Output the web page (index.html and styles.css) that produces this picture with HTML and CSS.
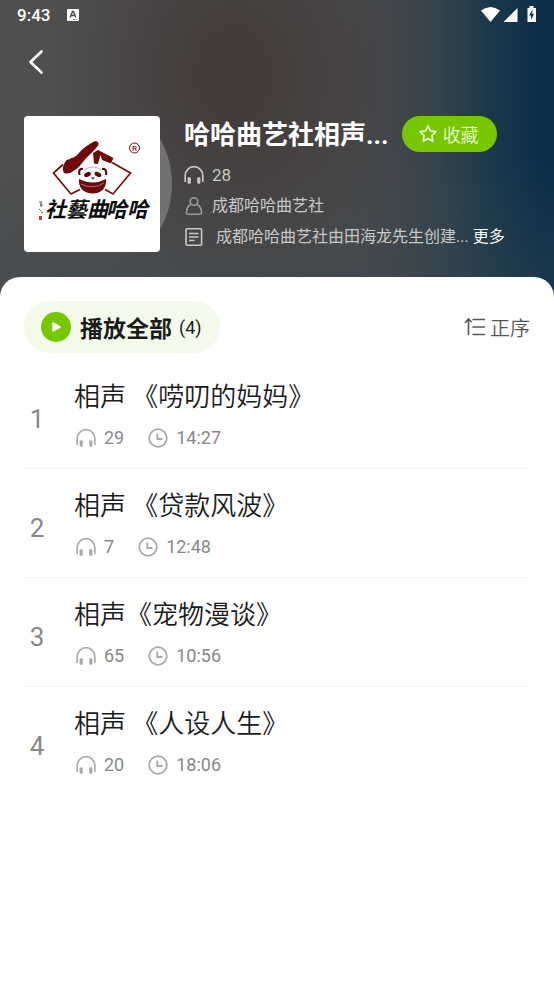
FILE: index.html
```html
<!DOCTYPE html>
<html lang="zh-CN">
<head>
  <meta charset="UTF-8">
  <meta name="viewport" content="width=device-width, initial-scale=1.0">
  <title>哈哈曲艺社相声</title>
  <link rel="stylesheet" href="styles.css">
</head>
<body>
  <!-- shared icons -->
  <svg class="defs" width="0" height="0" aria-hidden="true">
    <symbol id="headphones" viewBox="0 0 20 20">
      <path d="M1.200 17V10.500a8.800 8.800 0 0 1 17.600 0V17" fill="none" stroke="currentColor" stroke-width="1.700"/>
      <rect x="3.600" y="12.200" width="3.200" height="6.600" rx="1" fill="currentColor"/>
      <rect x="13.200" y="12.200" width="3.200" height="6.600" rx="1" fill="currentColor"/>
    </symbol>
    <symbol id="clock" viewBox="0 0 20 20">
      <circle cx="10" cy="10" r="8.800" fill="none" stroke="currentColor" stroke-width="1.800"/>
      <path d="M9.300 5.500V11H14.500" fill="none" stroke="currentColor" stroke-width="1.800"/>
    </symbol>
  </svg>

  <header class="hero">
    <div class="status-bar">
      <span class="time">9:43</span>
      <svg class="keyboard" width="12" height="14" viewBox="0 0 12 14">
        <rect y="1" width="12" height="12" rx="1" fill="#fff"/>
        <path d="M3.200 9.500L5.500 3.500H6.500L8.800 9.500M4 7.500H8" fill="none" stroke="#4a4a4a" stroke-width="1.400"/>
        <path d="M6 11.500h2M9.200 11.500h1" stroke="#4a4a4a" stroke-width="0.800"/>
      </svg>
      <svg class="signals" width="56" height="18" viewBox="0 0 56 18">
        <path d="M0 4.500Q9.500-2.500 19 4.500L9.500 16z" fill="#fff"/>
        <path d="M22.500 16L36.500 2V16z" fill="#fff"/>
        <path d="M46.500 2h2V0h4v2h2.500v14h-8.500z" fill="#fff"/>
        <path d="M51.500 3.500L48 9.500h2V14l3.200-6.200h-2z" fill="#24394a"/>
      </svg>
    </div>

    <nav class="nav">
      <button type="button" class="back" aria-label="返回">
        <svg width="16" height="26" viewBox="0 0 16 26"><path d="M13.500 2.500L2.500 13L13.500 23.500" fill="none" stroke="#fff" stroke-width="2.600" stroke-linecap="round" stroke-linejoin="round"/></svg>
      </button>
    </nav>

    <div class="album">
      <div class="cover">
        <svg width="136" height="136" viewBox="0 0 136 136" role="img" aria-label="哈哈曲艺社">
          <path d="M39 48.500L29.500 57L47 78L56 73.500M88 46.500L106.500 57L89 78L81 73.500" fill="none" stroke="#6f1010" stroke-width="1.700"/>
          <path d="M40 57C38 54 39 48 42 45C43 42 45 45 47 42C50 42 52 40 54 38C59 32 65 28 70 25.500C73 24.500 75 26 74.500 29C71 34 65 39 61 43.500C57 48 54 53 50 54.500C47 57 43 58.500 40 57z" fill="#6f0a0a"/>
          <path d="M69 37L74 34L89.500 42L87 47.500L78 44L76.500 39L74 48L70 47.500z" fill="#6f0a0a"/>
          <path d="M55.500 59Q54 52 59 53M78 53Q83 52 82 59" fill="none" stroke="#4f1010" stroke-width="2.200"/>
          <path d="M60 54Q69 48 78 54" fill="none" stroke="#b99" stroke-width="0.800"/>
          <ellipse cx="63.500" cy="58.500" rx="3.600" ry="2.200" transform="rotate(-25 63.500 58.500)" fill="#5a0a0a"/>
          <ellipse cx="74" cy="58.500" rx="3.600" ry="2.200" transform="rotate(25 74 58.500)" fill="#5a0a0a"/>
          <path d="M67 61.500h4l-2 2z" fill="#4f1010"/>
          <path d="M55 63Q69 70 82 63C83 72 77 77.500 69 77.500C60 77.500 54 72 55 63z" fill="#6f0a0a"/>
          <path d="M57 68Q69 74 80 67" fill="none" stroke="#c99" stroke-width="0.700"/>
          <circle cx="110.500" cy="32" r="5" fill="none" stroke="#6f1010" stroke-width="1"/>
          <text x="108" y="35" class="reg">R</text>
          <text x="21" y="101" class="brush">社藝曲</text>
          <text x="82" y="101" class="brush">哈哈</text>
          <path d="M15 86h3M16 89h3M17 86v5M15 93l2 2M17 96l2 1" stroke="#333" stroke-width="0.800"/>
          <rect x="15" y="100" width="3" height="4" fill="#a44"/>
        </svg>
      </div>

      <div class="info">
        <div class="title-row">
          <h1>哈哈曲艺社相声...</h1>
          <button type="button" class="favorite">
            <svg width="20" height="20" viewBox="0 0 20 20"><path d="M10 1.800L12.400 6.900L18 7.700L13.900 11.600L14.900 17.200L10 14.500L5.100 17.200L6.100 11.600L2 7.700L7.600 6.900z" fill="none" stroke="currentColor" stroke-width="1.700" stroke-linejoin="round"/></svg>
            收藏
          </button>
        </div>
        <div class="info-line count">
          <svg width="20" height="20"><use href="#headphones"/></svg>
          <span>28</span>
        </div>
        <div class="info-line author">
          <svg width="20" height="20" viewBox="0 0 20 20"><g fill="none" stroke="currentColor" stroke-width="1.600"><circle cx="10" cy="5.500" r="3.800"/><path d="M7 8.500C3.500 10 2.500 13 2.500 16.500Q2.500 18.200 4.200 18.200H15.800Q17.500 18.200 17.500 16.500C17.500 13 16.500 10 13 8.500"/></g></svg>
          <span>成都哈哈曲艺社</span>
        </div>
        <div class="info-line intro">
          <svg width="20" height="20" viewBox="0 0 20 20"><g fill="none" stroke="currentColor" stroke-width="1.600"><rect x="2" y="1.800" width="15.600" height="16.400" rx="1"/><path d="M5 6.500H14.500M5 10H14.500M5 13.500H10.500"/></g></svg>
          <span>成都哈哈曲艺社由田海龙先生创建...</span>
          <a href="#">更多</a>
        </div>
      </div>
    </div>
  </header>

  <main class="sheet">
    <div class="toolbar">
      <button type="button" class="play-all">
        <svg width="30" height="30" viewBox="0 0 30 30"><circle cx="15" cy="15" r="15" fill="#76c700"/><path d="M12 11V19L19 15z" fill="#fff" stroke="#fff" stroke-width="1.500" stroke-linejoin="round"/></svg>
        <strong>播放全部</strong>
        <span>(4)</span>
      </button>
      <button type="button" class="sort">
        <svg width="22" height="20" viewBox="0 0 22 20"><path d="M4.500 18V3M1 6L4.500 2L7.500 5M8.500 2.500H21M8.500 10H21M8.500 17.500H21" fill="none" stroke="currentColor" stroke-width="1.600"/></svg>
        正序
      </button>
    </div>

    <ol class="tracks">
      <li>
        <span class="num">1</span>
        <div class="track">
          <h2>相声 《唠叨的妈妈》</h2>
          <div class="meta">
            <span><svg width="20" height="20"><use href="#headphones"/></svg>29</span>
            <span><svg width="20" height="20"><use href="#clock"/></svg>14:27</span>
          </div>
        </div>
      </li>
      <li>
        <span class="num">2</span>
        <div class="track">
          <h2>相声 《贷款风波》</h2>
          <div class="meta">
            <span><svg width="20" height="20"><use href="#headphones"/></svg>7</span>
            <span><svg width="20" height="20"><use href="#clock"/></svg>12:48</span>
          </div>
        </div>
      </li>
      <li>
        <span class="num">3</span>
        <div class="track">
          <h2>相声《宠物漫谈》</h2>
          <div class="meta">
            <span><svg width="20" height="20"><use href="#headphones"/></svg>65</span>
            <span><svg width="20" height="20"><use href="#clock"/></svg>10:56</span>
          </div>
        </div>
      </li>
      <li>
        <span class="num">4</span>
        <div class="track">
          <h2>相声 《人设人生》</h2>
          <div class="meta">
            <span><svg width="20" height="20"><use href="#headphones"/></svg>20</span>
            <span><svg width="20" height="20"><use href="#clock"/></svg>18:06</span>
          </div>
        </div>
      </li>
    </ol>
  </main>
</body>
</html>
```
FILE: styles.css
```css
* {
  box-sizing: border-box;
}
body {
  margin: 0;
  background: #fff;
  color: #1b1b1b;
  font-family: Roboto, "Noto Sans CJK SC", sans-serif;
}
button {
  display: flex;
  align-items: center;
  padding: 0;
  border: none;
  background: none;
  color: inherit;
  font-family: inherit;
  cursor: pointer;
}
svg {
  flex: none;
  display: block;
}
.defs {
  position: absolute;
}

/* header */
.hero {
  padding: 0 24px 45px;
  color: #fff;
  background:
    radial-gradient(ellipse 32% 75% at 42% 25%, rgba(67, 59, 58, 0.9) 20%, rgba(67, 59, 58, 0)),
    linear-gradient(to bottom, rgba(58, 72, 80, 0) 50%, rgba(58, 72, 80, 0.4)),
    linear-gradient(to right, #505050 0%, #4a4a4a 60%, #43474c 70%, #33424b 80%, #1c394a 88%, #0a2d48 98%);
}
.status-bar {
  display: flex;
  align-items: center;
  height: 30px;
  margin: 0 -7px;
}
.time {
  font-size: 17px;
  font-weight: 500;
}
.keyboard {
  margin-left: 17px;
}
.signals {
  margin-left: auto;
}
.nav {
  height: 86px;
  padding-top: 19px;
}
.back {
  padding: 0 4px;
}
.album {
  display: flex;
  gap: 24px;
}
.cover {
  position: relative;
  flex: none;
  width: 136px;
  height: 136px;
}
/* edge of the disc behind the cover */
.cover::before {
  content: "";
  position: absolute;
  top: -24px;
  right: -12px;
  width: 184px;
  height: 184px;
  border-radius: 50%;
  background: #727171;
  clip-path: inset(24px 0 24px 48px);
}
.cover svg {
  position: relative;
  border-radius: 4px;
  background: #fff;
}
.brush {
  font: italic 700 21px "Noto Sans CJK TC", sans-serif;
  fill: #0c0c0c;
}
.reg {
  font: 500 8px Roboto, sans-serif;
  fill: #6f1010;
}
.info {
  flex: 1;
  min-width: 0;
}
.title-row {
  display: flex;
  align-items: center;
  gap: 13px;
  height: 36px;
  margin-bottom: 7px;
}
h1 {
  margin: 0;
  padding-top: 2px;
  font-size: 26px;
  font-weight: 700;
  line-height: 36px;
  white-space: nowrap;
}
.favorite {
  flex: none;
  gap: 5px;
  height: 36px;
  padding: 0 18px 0 16px;
  border-radius: 18px;
  background: #76c700;
  color: #e9f7d4;
  font-size: 18px;
  font-weight: 350;
}
.info-line {
  display: flex;
  align-items: center;
  gap: 8px;
  height: 31px;
  color: #c8c8c8;
  font-size: 16px;
  line-height: 20px;
  white-space: nowrap;
}
.count {
  font-size: 17px;
}
.author svg {
  color: #999;
}
.intro span {
  margin-left: 4px;
}
.intro a {
  margin-left: -4px;
  color: #fff;
  text-decoration: none;
}

/* list sheet */
.sheet {
  position: relative;
  margin-top: -20px;
  padding: 24px 24px 40px;
  border-radius: 20px 20px 0 0;
  background: #fff;
}
.toolbar {
  display: flex;
  align-items: center;
  justify-content: space-between;
  margin-bottom: 7px;
}
.play-all {
  height: 52px;
  padding: 0 18px 0 17px;
  border-radius: 26px;
  background: #f3faea;
  font-size: 18px;
}
.play-all strong {
  margin: 0 7px 0 9px;
  font-size: 23px;
  font-weight: 700;
}
.sort {
  gap: 4px;
  color: #555;
  font-size: 20px;
  font-weight: 350;
}
.tracks {
  margin: 0;
  padding: 0;
  list-style: none;
}
.tracks li {
  display: flex;
  align-items: center;
  height: 109px;
  border-bottom: 1px solid #f5f5f5;
}
.tracks li:last-child {
  border-color: transparent;
}
.num {
  width: 26px;
  margin-right: 24px;
  padding-top: 10px;
  color: #888;
  font-size: 26px;
  text-align: center;
}
.track h2 {
  margin: 0 0 10px;
  font-size: 26px;
  font-weight: 350;
  line-height: 38px;
}
.meta {
  display: flex;
  gap: 24px;
  padding-left: 2px;
  color: #888;
  font-size: 18px;
  line-height: 24px;
}
.meta span {
  display: flex;
  align-items: center;
  gap: 8px;
}
.meta svg {
  color: #aaa;
}
```
